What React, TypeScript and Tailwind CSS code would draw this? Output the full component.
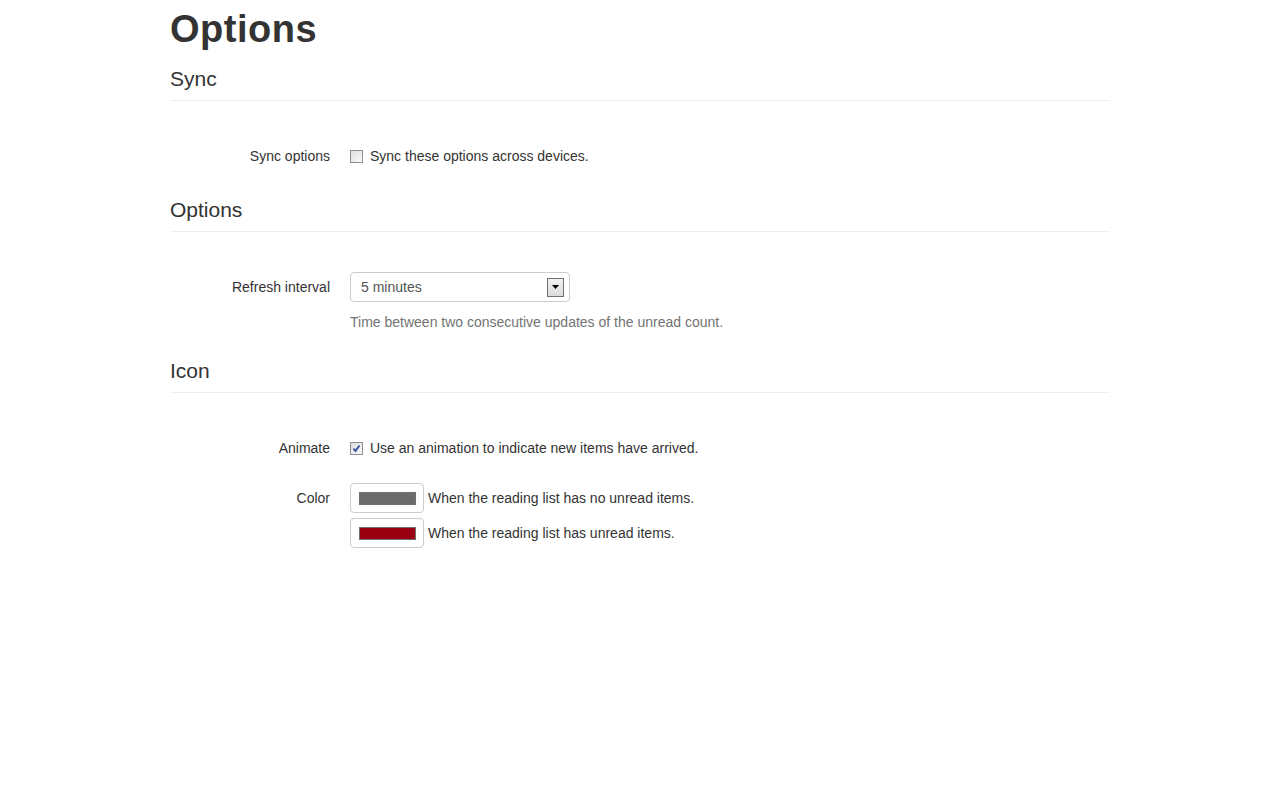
const font = { fontFamily: '"Liberation Sans", Arial, sans-serif' };

const Checkbox = ({ checked }: { checked?: boolean }) => (
  <span className="relative flex h-[13px] w-[13px] shrink-0 items-center justify-center border border-[#8f8f8f] bg-gradient-to-br from-[#dcdcdc] to-[#fbfbfb]">
    {checked && (
      <svg viewBox="0 0 11 11" className="h-[11px] w-[11px]">
        <path d="M2.5 5.5 L4.5 8 L8.5 2.5" fill="none" stroke="#2c4aa0" strokeWidth="1.8" />
      </svg>
    )}
  </span>
);

const SectionHeading = ({ title }: { title: string }) => (
  <h3 className="border-b border-[#eeeeee] pb-[8px] pt-[1px] text-[21px] leading-[26px] text-[#333]">{title}</h3>
);

const Row = ({ label, children }: { label: string; children: React.ReactNode }) => (
  <div className="flex">
    <div className="flex h-[30px] w-[160px] shrink-0 items-center justify-end text-[14px] text-[#333]">{label}</div>
    <div className="ml-[20px] flex flex-col">{children}</div>
  </div>
);

const ColorInput = ({ color, text }: { color: string; text: string }) => (
  <div className="flex items-center">
    <div className="flex h-[30px] w-[74px] items-center justify-center rounded-[4px] border border-[#cccccc] bg-white">
      <span className="h-[13px] w-[57px] border border-[#707070]" style={{ backgroundColor: color }} />
    </div>
    <span className="ml-[4px] text-[14px] text-[#333]">{text}</span>
  </div>
);

export default function App() {
  return (
    <div className="min-h-[800px] bg-white" style={font}>
      <div className="mx-auto w-[940px]">
        <h1 className="mt-[8px] h-[42px] text-[38px] font-bold leading-[42px] tracking-[0.5px] text-[#333]">Options</h1>

        <div className="mt-[15px]">
          <SectionHeading title="Sync" />
          <div className="mt-[40px]">
            <Row label="Sync options">
              <label className="flex h-[30px] items-center gap-[7px] text-[14px] text-[#333]">
                <Checkbox />
                Sync these options across devices.
              </label>
            </Row>
          </div>
        </div>

        <div className="mt-[25px]">
          <SectionHeading title="Options" />
          <div className="mt-[40px]">
            <Row label="Refresh interval">
              <div className="flex h-[30px] w-[220px] items-center justify-between rounded-[4px] border border-[#cccccc] bg-white pl-[10px] pr-[5px] text-[14px] text-[#555]">
                <span>5 minutes</span>
                <span className="flex h-[19px] w-[17px] items-center justify-center border border-[#707070] bg-gradient-to-b from-[#f2f2f2] to-[#dcdcdc]">
                  <svg viewBox="0 0 7 4" className="h-[4px] w-[7px]">
                    <path d="M0 0 H7 L3.5 4 Z" fill="#000" />
                  </svg>
                </span>
              </div>
              <p className="mt-[10px] text-[14px] leading-[20px] text-[#737373]">
                Time between two consecutive updates of the unread count.
              </p>
            </Row>
          </div>
        </div>

        <div className="mt-[25px]">
          <SectionHeading title="Icon" />
          <div className="mt-[40px]">
            <Row label="Animate">
              <label className="flex h-[30px] items-center gap-[7px] text-[14px] text-[#333]">
                <Checkbox checked />
                Use an animation to indicate new items have arrived.
              </label>
            </Row>
          </div>
          <div className="mt-[20px]">
            <Row label="Color">
              <div className="flex flex-col gap-[5px]">
                <ColorInput color="#6b6b6b" text="When the reading list has no unread items." />
                <ColorInput color="#990012" text="When the reading list has unread items." />
              </div>
            </Row>
          </div>
        </div>
      </div>
    </div>
  );
}
